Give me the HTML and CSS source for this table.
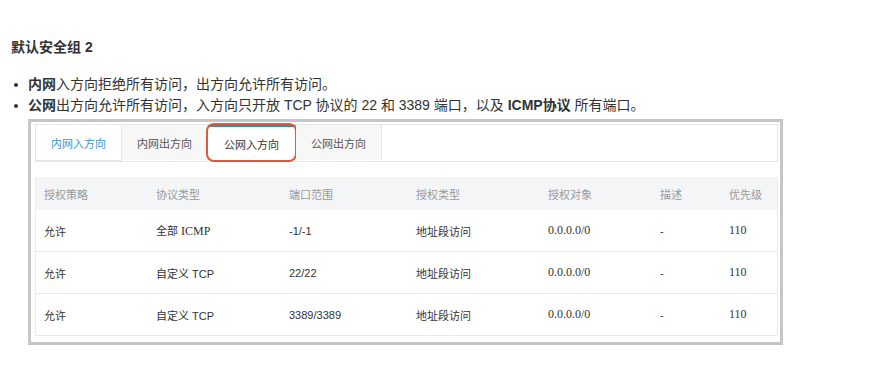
FILE: index.html
```html
<!DOCTYPE html>
<html lang="zh-CN">
<head>
<meta charset="utf-8">
<link rel="stylesheet" href="styles.css">
</head>
<body>
<div class="page">
  <h3 class="title">默认安全组 2</h3>
  <ul class="notes">
    <li><span><b>内网</b>入方向拒绝所有访问，出方向允许所有访问。</span></li>
    <li><span><b>公网</b>出方向允许所有访问，入方向只开放 TCP 协议的 22 和 3389 端口，以及 <b>ICMP协议</b> 所有端口。</span></li>
  </ul>
  <div class="frame">
    <div class="tabbar">
      <div class="tab tab-first">内网入方向</div>
      <div class="tab">内网出方向</div>
      <div class="tab tab-active">公网入方向<span class="mark"></span></div>
      <div class="tab">公网出方向</div>
    </div>
    <div class="table">
      <div class="row head">
        <div class="c c1">授权策略</div>
        <div class="c c2">协议类型</div>
        <div class="c c3">端口范围</div>
        <div class="c c4">授权类型</div>
        <div class="c c5">授权对象</div>
        <div class="c c6">描述</div>
        <div class="c c7">优先级</div>
      </div>
      <div class="row">
        <div class="c c1">允许</div>
        <div class="c c2">全部 <span class="serif">ICMP</span></div>
        <div class="c c3">-1/-1</div>
        <div class="c c4">地址段访问</div>
        <div class="c c5 serif">0.0.0.0/0</div>
        <div class="c c6">-</div>
        <div class="c c7 serif">110</div>
      </div>
      <div class="row">
        <div class="c c1">允许</div>
        <div class="c c2">自定义 TCP</div>
        <div class="c c3">22/22</div>
        <div class="c c4">地址段访问</div>
        <div class="c c5 serif">0.0.0.0/0</div>
        <div class="c c6">-</div>
        <div class="c c7 serif">110</div>
      </div>
      <div class="row">
        <div class="c c1">允许</div>
        <div class="c c2">自定义 TCP</div>
        <div class="c c3">3389/3389</div>
        <div class="c c4">地址段访问</div>
        <div class="c c5 serif">0.0.0.0/0</div>
        <div class="c c6">-</div>
        <div class="c c7 serif">110</div>
      </div>
    </div>
  </div>
</div>
</body>
</html>
```
FILE: styles.css
```css
html, body {
  margin: 0;
  padding: 0;
  background: #ffffff;
}
body {
  font-family: "Liberation Sans", "Noto Sans CJK SC", sans-serif;
  color: #333333;
}
.page {
  padding: 37px 0 0 11px;
}
.title {
  margin: 0;
  font-size: 14px;
  line-height: 20px;
  font-weight: bold;
  color: #333333;
}
.notes {
  list-style: none;
  margin: 17px 0 0 0;
  padding: 0;
}
.notes li {
  display: flex;
  align-items: center;
  font-size: 14px;
  line-height: 21px;
  color: #333333;
}
.notes li::before {
  content: "";
  flex: none;
  width: 4px;
  height: 4px;
  border-radius: 50%;
  background: #333333;
  margin: 0 10px 0 3px;
}
.notes b {
  font-weight: bold;
}
.frame {
  margin: 3px 0 0 17px;
  width: 743px;
  border: 3px solid #c6c6c6;
  padding: 2px 2px 6px 4px;
  background: #ffffff;
}
.tabbar {
  display: flex;
  border-top: 1px solid #e8e8e8;
  border-bottom: 1px solid #e6e6e6;
  border-right: 1px solid #e6e6e6;
  height: 36px;
}
.tab {
  position: relative;
  width: 86px;
  height: 35px;
  border-right: 1px solid #e6e6e6;
  background: #f7f7f7;
  font-size: 11px;
  color: #555555;
  display: flex;
  align-items: center;
  justify-content: center;
  box-sizing: border-box;
}
.tab-first {
  background: #ffffff;
  color: #3a98cc;
  border-left: 1px solid #e6e6e6;
  border-bottom: 1px solid #e6e6e6;
  height: 36px;
  width: 87px;
}
.tab-active {
  background: #ffffff;
  color: #333333;
  border-top: 2px solid #2e8cb8;
  height: 36px;
  width: 88px;
}
.mark {
  position: absolute;
  left: -2px;
  top: -4px;
  right: -2px;
  bottom: -1px;
  border: 2px solid #d95b3f;
  border-radius: 8px;
}
.table {
  margin-top: 15px;
  border-left: 1px solid #ececec;
  border-right: 1px solid #ececec;
  font-size: 11px;
}
.row {
  display: flex;
  align-items: center;
  height: 42px;
  border-bottom: 1px solid #e8e8e8;
  box-sizing: border-box;
  color: #333333;
}
.row.head {
  height: 33px;
  background: #f4f5f7;
  color: #999999;
  border-bottom: none;
}
.c {
  flex: none;
  box-sizing: border-box;
  padding-left: 8px;
  white-space: nowrap;
}
.c1 { width: 112px; }
.c2 { width: 133px; }
.c3 { width: 127px; }
.c4 { width: 132px; }
.c5 { width: 112px; }
.c6 { width: 69px; }
.c7 { flex: 1; }
.serif {
  font-family: "Liberation Serif", "Noto Sans CJK SC", serif;
  font-size: 12px;
}
```
